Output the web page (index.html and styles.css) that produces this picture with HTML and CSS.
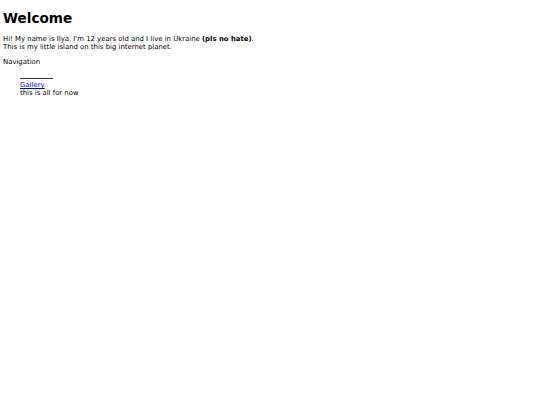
FILE: index.html
```html
<!DOCTYPE html>
<html>
<head>
<meta charset="utf-8">
<link rel="stylesheet" href="styles.css">
</head>
<body>
<h1 class="title">Welcome</h1>
<p class="intro">Hi! My name is Ilya, I'm 12 years old and I live in Ukraine <b>(pls no hate)</b>.<br>This is my little island on this big internet planet.</p>
<p class="nav-label">Navigation</p>
<div class="nav">
<div class="rule"></div>
<a class="link" href="#">Gallery</a>
<div class="note">this is all for now</div>
</div>
</body>
</html>
```
FILE: styles.css
```css
html, body { background: #fff; }
body {
  margin: 0;
  padding: 10px 3px 0;
  font-family: "DejaVu Sans", Verdana, sans-serif;
  font-size: 6.9px;
  line-height: 8px;
  color: #000;
}
.title {
  margin: 0 0 9px;
  font-size: 13.6px;
  line-height: 16px;
  font-weight: bold;
}
.intro { margin: 0 0 7px; }
.nav-label { margin: 0 0 12px; }
.nav { padding-left: 17px; display: flex; flex-direction: column; align-items: flex-start; }
.rule { width: 33px; height: 0; border-top: 1px solid #333; margin-bottom: 2px; }
.link { color: #0000ee; }
```
